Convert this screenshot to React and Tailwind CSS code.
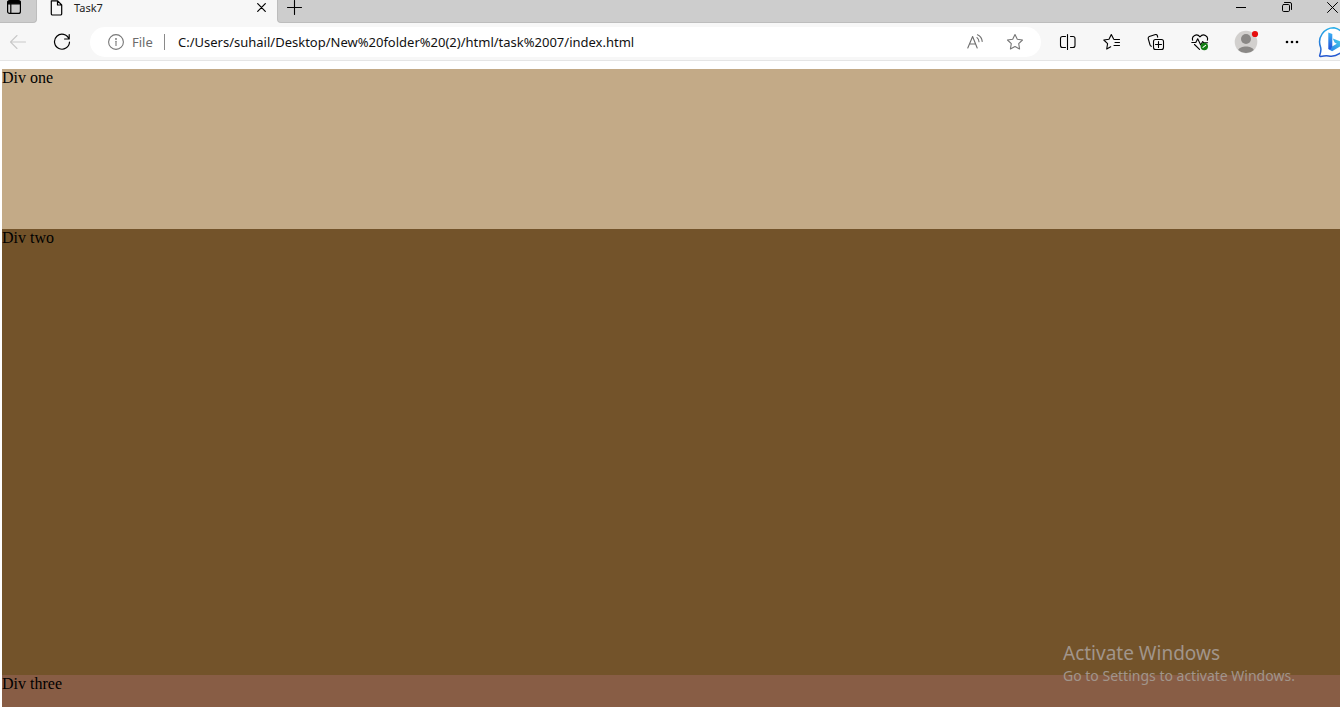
import React from "react";

function IconButton({ label, className = "w-9", disabled = false, children }) {
  return (
    <button
      type="button"
      aria-label={label}
      disabled={disabled}
      className={`flex h-[30px] shrink-0 items-center justify-center ${className}`}
    >
      {children}
    </button>
  );
}

function Icon({ size = 18, box, className = "", children, strokeWidth = 1.1 }) {
  return (
    <svg
      width={size}
      height={size}
      viewBox={box || `0 0 ${size} ${size}`}
      fill="none"
      stroke="currentColor"
      strokeWidth={strokeWidth}
      strokeLinecap="round"
      strokeLinejoin="round"
      className={`shrink-0 ${className}`}
      aria-hidden="true"
    >
      {children}
    </svg>
  );
}

function TabStrip() {
  return (
    <header className="flex h-[23px] items-stretch bg-[#f7f7f7]">
      <div className="flex w-[37px] shrink-0 items-start rounded-br-[4px] border-r border-b border-[#bdbdbd] bg-[#cdcdcd]">
        <button type="button" aria-label="Tab actions menu" className="flex h-[14px] w-[28px] items-center justify-center">
          <Icon size={14} strokeWidth={1.2}>
            <rect x="0.6" y="0.6" width="12.8" height="12.8" rx="2" />
            <path d="M1 1.3h12v2.5H1z" fill="currentColor" />
            <path d="M3.8 4v9" />
          </Icon>
        </button>
      </div>
      <div className="flex h-[15px] w-60 shrink-0 items-center pr-[11px] pl-[13px]">
        <Icon size={13} box="0 0 12 16" className="h-4 text-black" strokeWidth={1.2}>
          <path d="M1 .8h6.2L11.2 5v8.8a1.2 1.2 0 0 1-1.2 1.2H2a1.2 1.2 0 0 1-1.2-1.2V.8zM7 .8V5h4.2" />
        </Icon>
        <span className="ml-[11px] flex-1 text-[11px] leading-[15px] text-[#222]">Task7</span>
        <button type="button" aria-label="Close tab">
          <Icon size={9} strokeWidth={1.2}>
            <path d="M.7 .7l7.600 7.600M8.300 .7L.7 8.300" />
          </Icon>
        </button>
      </div>
      <div className="flex min-w-0 flex-1 items-start justify-between rounded-bl-[4px] border-b border-l border-[#bdbdbd] bg-[#cdcdcd]">
        <button type="button" aria-label="New tab" className="flex h-[14px] w-[33px] items-center justify-center">
          <Icon size={15}>
            <path d="M7.5 .5v14M.5 7.5h14" />
          </Icon>
        </button>
        <div className="flex">
          <button type="button" aria-label="Minimize" className="flex h-[14px] w-[46px] items-center justify-center">
            <Icon size={10} strokeWidth={1}>
              <path d="M0 5.5h10" strokeLinecap="butt" />
            </Icon>
          </button>
          <button type="button" aria-label="Restore" className="flex h-[14px] w-[46px] items-center justify-center">
            <Icon size={10} strokeWidth={1}>
              <rect x=".5" y="2.5" width="7" height="7" rx="1.2" />
              <path d="M2.5 .5H8a1.5 1.5 0 0 1 1.5 1.5v5.5" />
            </Icon>
          </button>
          <button type="button" aria-label="Close window" className="flex h-[14px] w-[30px] items-center pl-[17px]">
            <Icon size={11} strokeWidth={1}>
              <path d="M.5 .5l10 10M10.500 .5l-10 10" />
            </Icon>
          </button>
        </div>
      </div>
    </header>
  );
}

const STAR = "M9 1.500l2.300 4.800 5.200.7-3.800 3.700.9 5.300L9 13.500l-4.600 2.500.9-5.300L1.500 7l5.200-.7z";

function AddressBar() {
  return (
    <div className="ml-[10px] flex h-[30px] min-w-0 flex-1 items-center rounded-full bg-white pr-2 pl-[18px]">
      <Icon size={16} className="text-[#777]">
        <circle cx="8" cy="8" r="7.4" />
        <path d="M8 7.200v4.200" />
        <circle cx="8" cy="4.900" r=".4" fill="currentColor" />
      </Icon>
      <span className="ml-2 w-[22px] text-[13px] leading-[18px] text-[#6b6b6b]">File</span>
      <span className="ml-[10px] h-4 w-px bg-[#8a8a8a]" />
      <input
        type="text"
        aria-label="Address"
        defaultValue="C:/Users/suhail/Desktop/New%20folder%20(2)/html/task%2007/index.html"
        className="ml-[13px] min-w-0 flex-1 bg-transparent text-[13px] leading-[18px] text-[#111] outline-none"
      />
      <IconButton label="Read aloud">
        <Icon size={16} className="text-[#6e6e6e]">
          <path d="M.8 14L5.600 2.500l4.600 11.500M2.600 10h6M10 3.600a5 5 0 0 1 2 4.200M10.500 .8a8 8 0 0 1 4.700 6.600" />
        </Icon>
      </IconButton>
      <IconButton label="Add to favorites" className="ml-1 w-9">
        <Icon className="text-[#767676]">
          <path d={STAR} />
        </Icon>
      </IconButton>
    </div>
  );
}

function Toolbar() {
  return (
    <nav aria-label="Browser toolbar" className="flex h-[38px] items-center overflow-hidden border-b border-[#e5e5e5] bg-[#f7f7f7] text-black">
      <IconButton label="Back" disabled>
        <Icon className="text-[#c9c9c9]">
          <path d="M16.500 9H1.500M8 2.500L1.500 9 8 15.500" />
        </Icon>
      </IconButton>
      <IconButton label="Refresh" className="ml-2 w-9">
        <Icon strokeWidth={1.2}>
          <path d="M16 6A7.500 7.500 0 1 0 16.500 9M16.200 1.500V6h-4.600" />
        </Icon>
      </IconButton>
      <AddressBar />
      <div className="ml-[9px] flex items-center gap-2">
        <IconButton label="Split screen">
          <Icon strokeWidth={1.1}>
            <path d="M6.500 3.500H3.500Q1.500 3.500 1.500 5.500v7q0 2 2 2H6.500M11.500 3.500h2.500q2 0 2 2v7q0 2-2 2h-2.500M8.500 1.500v15" />
          </Icon>
        </IconButton>
        <IconButton label="Favorites">
          <Icon strokeWidth={1.1}>
            <path d="M10.500 5.800L8.300 1.500 6 6.200.8 7l3.800 3.700L3.700 16l4-2.200M11 6.500h5.500M12 9.500h4.500M11 12.500h5.500" />
          </Icon>
        </IconButton>
        <IconButton label="Collections">
          <Icon strokeWidth={1.1}>
            <rect x="6.500" y="6.500" width="10" height="10" rx="2" />
            <path d="M11.500 8.500v6M8.500 11.500h6M4.500 13.200Q3.300 13 3 11.800L1.200 5.500Q1 4 2.300 3.500L8.500 1.500q1.300-.3 1.800 1l.4 1.600" />
          </Icon>
        </IconButton>
        <IconButton label="Browser essentials">
          <Icon strokeWidth={1.1}>
            <path d="M1.700 7.300C.2 3 5.800-.2 9 3.800 12.200-.2 17.800 3 16.300 7.300M.8 9.500h4l1.900-3.800 3 6.300L11.700 8.500l.9 1.200h4M3.500 11.500L8.500 16.300" />
            <circle cx="13.300" cy="13.500" r="3.700" fill="#107c10" stroke="none" />
            <path d="M12 14.400l2.600-2" stroke="#fff" />
          </Icon>
        </IconButton>
      </div>
      <IconButton label="Profile" className="ml-[10px] w-9">
        <svg width="24" height="24" viewBox="0 0 24 24" className="overflow-visible" aria-hidden="true">
          <circle cx="12" cy="12" r="11.300" fill="#d2d0ce" />
          <circle cx="12" cy="9" r="5" fill="#8a8886" />
          <path d="M4.200 20c1.500-4.700 14.100-4.700 15.600 0a11.300 11.300 0 0 1-15.600 0z" fill="#8a8886" />
          <circle cx="21" cy="4" r="3.100" fill="#e60f0f" />
        </svg>
      </IconButton>
      <IconButton label="Settings and more" className="ml-[10px] w-9">
        <svg width="14" height="4" viewBox="0 0 14 4" aria-hidden="true">
          <circle cx="2" cy="2" r="1.300" />
          <circle cx="7" cy="2" r="1.300" />
          <circle cx="12" cy="2" r="1.300" />
        </svg>
      </IconButton>
      <button type="button" aria-label="Bing" className="ml-2 flex h-8 w-[22px] shrink-0 items-center overflow-hidden">
        <svg width="32" height="32" viewBox="0 0 32 32" className="shrink-0" aria-hidden="true">
          <defs>
            <linearGradient id="ring" x1="0" y1="0" x2="0" y2="1">
              <stop offset="0" stopColor="#28aee8" />
              <stop offset="1" stopColor="#2456cf" />
            </linearGradient>
            <linearGradient id="stem" x1="0" y1="0" x2="0" y2="1">
              <stop offset="0" stopColor="#3cb4f5" />
              <stop offset="1" stopColor="#1f4fd8" />
            </linearGradient>
            <linearGradient id="bowl" x1="0" y1="1" x2="1" y2="0">
              <stop offset="0" stopColor="#2a7be8" />
              <stop offset="1" stopColor="#45d3e8" />
            </linearGradient>
          </defs>
          <path d="M16 1.700A14.300 14.300 0 0 0 2.600 21.200c.8 2.800-.2 6.300-.9 8.300-.2.700.2 1 .9.900 3-.6 5.300-1 8-.5A14.300 14.300 0 1 0 16 1.700z" fill="#fff" stroke="url(#ring)" strokeWidth="1.500" />
          <path d="M14.100 20.400l4.700-2.600-2.200-1.200-1.800-4.200 8.400 3.200v4.200l-9.100 5.400-3.800-2.300z" fill="url(#bowl)" />
          <path d="M10.300 6.500l4 1.500v12.600l-2 2.800-2-.5z" fill="url(#stem)" />
        </svg>
      </button>
    </nav>
  );
}

function Watermark() {
  return (
    <aside className="pointer-events-none absolute right-10 bottom-[23px] w-[237px] text-[#a1958b]">
      <p className="text-[19px] leading-[26px]">Activate Windows</p>
      <p className="text-[14px] leading-5 whitespace-nowrap">Go to Settings to activate Windows.</p>
    </aside>
  );
}

export default function App() {
  return (
    <div className="relative flex min-h-screen flex-col bg-white font-['Noto_Sans',sans-serif]">
      <TabStrip />
      <Toolbar />
      <main className="flex flex-1 flex-col pt-2 pb-0.5 pl-0.5 font-['Liberation_Serif',serif] text-[16px] leading-[18px] text-black">
        <div className="h-40 bg-[#c3aa87]">Div one</div>
        <div className="min-h-40 flex-1 bg-[#73532a]">Div two</div>
        <div className="h-8 bg-[#885d45]">Div three</div>
      </main>
      <Watermark />
    </div>
  );
}
